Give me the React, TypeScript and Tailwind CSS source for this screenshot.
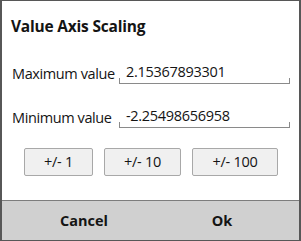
import React from "react";

// dialog for the value axis range
export default function App() {
  const rows = [
    { label: "Maximum value", value: "2.15367893301" },
    { label: "Minimum value", value: "-2.25498656958" },
  ];
  const steps = [
    { text: "+/- 1", w: "w-[69px]" },
    { text: "+/- 10", w: "w-[77px]" },
    { text: "+/- 100", w: "w-[86px]" },
  ];

  return (
    <div
      className="w-[301px] h-[241px] bg-white border-t border-l-2 border-r-2 border-b border-[#575757] flex flex-col text-[#141414]"
      style={{ fontFamily: "'Open Sans', 'Noto Sans', sans-serif" }}
    >
      <div className="h-[199px] flex flex-col">
        <h1 className="pl-[9px] pt-[15px] text-[15.5px] font-bold leading-[20px] tracking-[-0.2px]">
          Value Axis Scaling
        </h1>

        <div className="mt-[26px] flex flex-col gap-[22px]">
          {rows.map((row) => (
            <div key={row.label} className="flex items-end pl-[10px] h-[22px]">
              <span className="text-[14.5px] leading-[20px] w-[107px] tracking-[-0.4px]">
                {row.label}
              </span>
              <div className="relative w-[171px] h-[22px] border-b border-[#8a8a8a] pl-[7px]">
                <span className="text-[14.5px] leading-[20px] block tracking-[-0.3px]">
                  {row.value}
                </span>
                <span className="absolute left-0 bottom-0 w-px h-[5px] bg-[#8a8a8a]" />
                <span className="absolute right-0 bottom-0 w-px h-[5px] bg-[#8a8a8a]" />
              </div>
            </div>
          ))}
        </div>

        <div className="mt-[20px] flex pl-[22px] gap-[11px]">
          {steps.map((s) => (
            <button
              key={s.text}
              className={`${s.w} h-[28px] bg-[#f0f0f0] border border-[#a8a8a8] rounded-[2px] text-[14.5px] leading-none tracking-[-0.3px]`}
            >
              {s.text}
            </button>
          ))}
        </div>
      </div>

      <div className="flex-1 bg-[#d0d0d0] border-t border-[#7d7d7d] flex items-center text-[14.5px] font-bold">
        <button className="w-[160px] pl-[4px] text-center">Cancel</button>
        <button className="w-[120px] text-center">Ok</button>
      </div>
    </div>
  );
}
